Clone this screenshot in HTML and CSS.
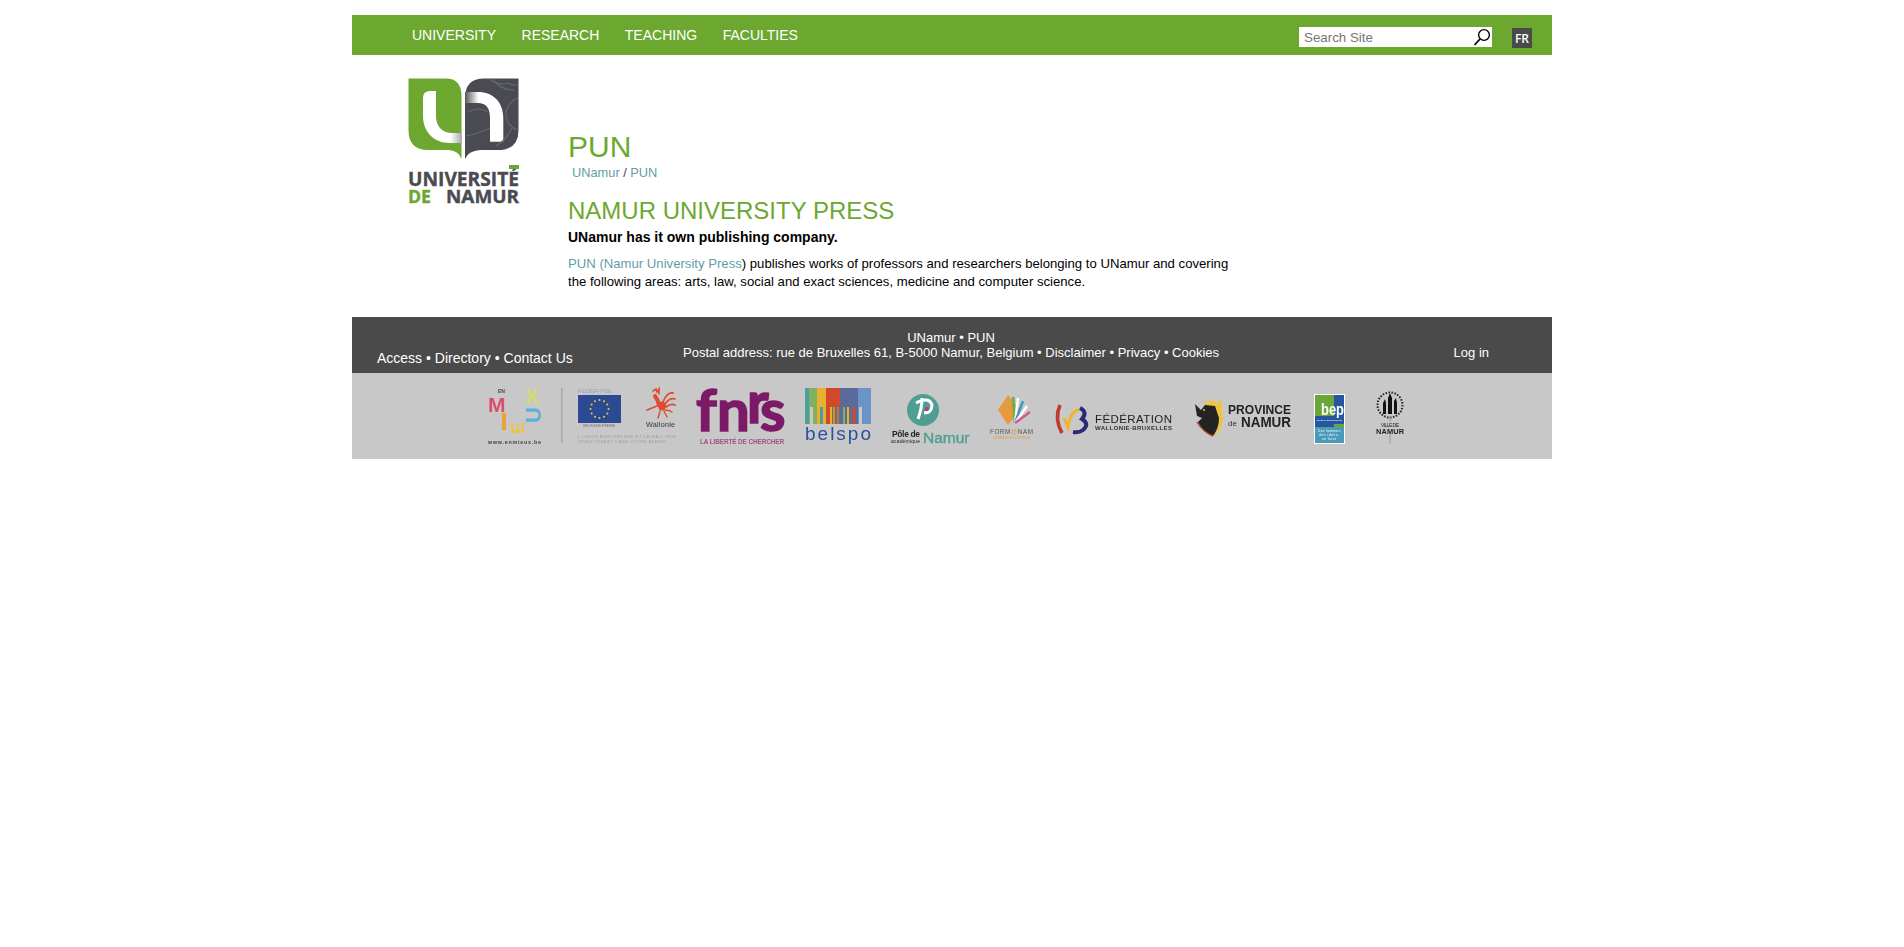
FILE: index.html
```html
<!DOCTYPE html>
<html lang="en">
  <head>
    <meta charset="UTF-8" />
    <meta name="viewport" content="width=device-width, initial-scale=1.0" />
    <title>PUN - UNamur</title>
    <link rel="stylesheet" href="styles.css">
  </head>

  <body>
    <div class="wrapper">
      <header class="topbar">
        <nav class="menu">
          <a href="#">UNIVERSITY</a>
          <a href="#">RESEARCH</a>
          <a href="#">TEACHING</a>
          <a href="#">FACULTIES</a>
        </nav>
        <form class="search">
          <input type="text" placeholder="Search Site" />
          <svg width="20" height="20" viewBox="0 0 20 20">
            <circle cx="12" cy="8" r="5.4" fill="none" stroke="#000" stroke-width="1.4" />
            <path d="M8 12 L2.5 18" stroke="#000" stroke-width="1.8" fill="none" />
          </svg>
        </form>
        <a class="lang" href="#">FR</a>
      </header>

      <main class="main">
        <div class="brand">
          <svg width="112" height="130" viewBox="0 0 112 130">
            <defs>
              <linearGradient id="ufade" x1="0" x2="1" y1="0" y2="0">
                <stop offset="0.7" stop-color="#fff" />
                <stop offset="1" stop-color="#a9a9a9" />
              </linearGradient>
              <linearGradient id="nfade" x1="0" x2="1" y1="0" y2="0">
                <stop offset="0" stop-color="#55565c" />
                <stop offset="0.35" stop-color="#fff" />
              </linearGradient>
            </defs>
            <path d="M0.5 0.5 H38 Q53.5 0.5 53.5 18 V81 Q51 73 41 72 H20 Q0.5 72 0.5 52 Z" fill="#6ca82f" />
            <path d="M57 81 V20 Q57 0.5 76 0.5 H110.5 V52 Q110.5 72 90 72 H72 Q60 73 57 81 Z" fill="#4a4b52" />
            <path d="M15 20 Q15 13 22 13 H28 V38 C28 48 34 55 44 55 H54 V65 H42 C26 65 15 54 15 38 Z" fill="url(#ufade)" />
            <path d="M57 14 H70 C85 14 95.3 24 95.3 40 V63.7 H82 V40 Q82 25 70 25 H57 Z" fill="url(#nfade)" />
            <g fill="none" stroke="#66676d" stroke-width="1.2">
              <path d="M82 1 Q90 8 100 5 Q105 8 110 7" />
              <path d="M86 3 Q94 12 106 12" />
              <path d="M60 34 Q70 28 80 34" />
              <path d="M58 58 Q70 56 82 50" />
              <path d="M88 68 Q98 62 104 50" />
              <path d="M110 20 A 18 18 0 0 0 98 38 A 16 16 0 0 0 110 52" />
            </g>
            <text class="brand-name" x="0" y="108" textLength="111" lengthAdjust="spacingAndGlyphs" font-size="20" fill="#4a4b52" stroke="#4a4b52" stroke-width="0.4">UNIVERSITÉ</text>
            <rect x="101" y="87" width="10" height="4" fill="#6ca82f" />
            <text class="brand-name" x="0" y="125" textLength="23" lengthAdjust="spacingAndGlyphs" font-size="18" fill="#6ca82f" stroke="#6ca82f" stroke-width="0.4">DE</text>
            <text class="brand-name" x="38" y="125" textLength="73" lengthAdjust="spacingAndGlyphs" font-size="18" fill="#4a4b52" stroke="#4a4b52" stroke-width="0.4">NAMUR</text>
          </svg>
        </div>

        <section class="content">
          <h1>PUN</h1>
          <p class="crumbs"><a href="#">UNamur</a> / <a href="#">PUN</a></p>
          <h2>NAMUR UNIVERSITY PRESS</h2>
          <p class="lead">UNamur has it own publishing company.</p>
          <p class="text"><a href="#">PUN (Namur University Press</a>) publishes works of professors and researchers belonging to UNamur and covering the following areas: arts, law, social and exact sciences, medicine and computer science.</p>
        </section>
      </main>

      <footer class="foot">
        <div class="foot-left"><a href="#">Access</a> • <a href="#">Directory</a> • <a href="#">Contact Us</a></div>
        <div class="foot-mid">
          <a href="#">UNamur</a> • <a href="#">PUN</a><br />
          Postal address: rue de Bruxelles 61, B-5000 Namur, Belgium • <a href="#">Disclaimer</a> • <a href="#">Privacy</a> • <a href="#">Cookies</a>
        </div>
        <div class="foot-right"><a href="#">Log in</a></div>
      </footer>

      <div class="partners">
        <!-- en mieux -->
        <svg width="53" height="60" viewBox="0 0 53 60">
          <text class="b" x="0" y="25.7" font-size="21" fill="#d9506f">M</text>
          <text class="b" x="10" y="7" font-size="5" fill="#444">EN</text>
          <text class="b" x="37" y="18.3" font-size="22" fill="#d4dc70">X</text>
          <text class="b" transform="translate(53 37) rotate(-90)" font-size="22" fill="#5cb0e0">U</text>
          <rect x="14" y="27" width="4" height="17" fill="#e8a23a" />
          <text class="b" transform="translate(36 48) rotate(-90)" font-size="18" fill="#eec342">E</text>
          <text class="b" x="0" y="58" font-size="5.4" textLength="53" fill="#444">www.enmieux.be</text>
        </svg>

        <!-- feder + wallonie -->
        <svg width="115" height="60" viewBox="0 0 115 60">
          <rect x="0" y="2" width="1.5" height="55" fill="#a8a8a8" />
          <text x="17" y="7" font-size="6" textLength="34" fill="#9aa0bb">FEDER-FSE</text>
          <rect x="17" y="9" width="43" height="28" fill="#2c4a94" />
          <g fill="#e8d040">
            <circle cx="38.5" cy="14" r="1" /><circle cx="43" cy="15.2" r="1" /><circle cx="46.3" cy="18.5" r="1" />
            <circle cx="47.5" cy="23" r="1" /><circle cx="46.3" cy="27.5" r="1" /><circle cx="43" cy="30.8" r="1" />
            <circle cx="38.5" cy="32" r="1" /><circle cx="34" cy="30.8" r="1" /><circle cx="30.7" cy="27.5" r="1" />
            <circle cx="29.5" cy="23" r="1" /><circle cx="30.7" cy="18.5" r="1" /><circle cx="34" cy="15.2" r="1" />
          </g>
          <text x="22" y="40.5" font-size="2.8" textLength="32" fill="#666">UNION EUROPÉENNE</text>
          <g fill="none" stroke="#e04a30" stroke-linecap="round">
            <path d="M94 10 Q97 14 98 19" stroke-width="4" />
            <path d="M92 5 L95 3 L96 6 L98 3 L98 8" stroke-width="1.6" />
            <ellipse cx="101" cy="20" rx="4" ry="4.5" fill="#e04a30" stroke="none" />
            <path d="M102 16 Q106 6 112 7" stroke-width="1.8" />
            <path d="M104 18 Q109 11 114 13" stroke-width="1.8" />
            <path d="M105 21 Q110 17 114 19" stroke-width="1.8" />
            <path d="M104 24 Q108 24 111 26" stroke-width="1.4" />
            <path d="M96 20 Q91 22 86 24" stroke-width="1.6" />
            <path d="M99 25 L97 32" stroke-width="1.4" />
            <path d="M103 25 L106 31" stroke-width="1.4" />
          </g>
          <text x="85" y="41" font-size="7.2" textLength="29" fill="#333">Wallonie</text>
          <text x="17" y="51.5" font-size="4" textLength="98" fill="#9b9b9b">L'UNION EUROPÉENNE ET LA WALLONIE</text>
          <text x="17" y="57" font-size="4" textLength="88" fill="#9b9b9b">INVESTISSENT DANS VOTRE AVENIR</text>
        </svg>

        <!-- fnrs -->
        <svg width="89" height="60" viewBox="0 0 89 60">
          <text class="fnrs" font-size="58" fill="#7d1a68" stroke="#7d1a68" stroke-width="1.6"><tspan x="0" y="45">f</tspan><tspan x="21" y="45">n</tspan><tspan x="51" y="37">r</tspan><tspan x="64" y="45">s</tspan></text>
          <text class="b" x="4" y="58" font-size="6.4" textLength="84" fill="#a0508a">LA LIBERTÉ DE CHERCHER</text>
        </svg>

        <!-- belspo -->
        <svg width="66" height="60" viewBox="0 0 66 60">
          <rect x="0" y="2" width="4" height="36" fill="#4aa0a0" />
          <rect x="4" y="2" width="8" height="36" fill="#80b060" />
          <rect x="12" y="2" width="9" height="36" fill="#e8b030" />
          <rect x="21" y="2" width="14" height="36" fill="#d04a2a" />
          <rect x="35" y="2" width="18" height="36" fill="#5a6a9a" />
          <rect x="53" y="2" width="13" height="36" fill="#6a94c8" />
          <g>
            <rect x="5" y="21" width="3" height="17" fill="#c8c8c8" />
            <rect x="15" y="21" width="3" height="17" fill="#4aa0a0" />
            <rect x="25" y="21" width="2" height="17" fill="#e8b030" />
            <rect x="28" y="21" width="2" height="17" fill="#80b060" />
            <rect x="32" y="21" width="2" height="17" fill="#4aa0a0" />
            <rect x="38" y="21" width="2" height="17" fill="#80b060" />
            <rect x="42" y="21" width="2" height="17" fill="#e8b030" />
            <rect x="47" y="21" width="3" height="17" fill="#d04a2a" />
            <rect x="54" y="21" width="3" height="17" fill="#c8c8c8" />
          </g>
          <text x="0" y="54" font-size="19" textLength="66" fill="#2c50a0">belspo</text>
        </svg>

        <!-- pole de namur -->
        <svg width="79" height="60" viewBox="0 0 79 60">
          <circle cx="32" cy="24" r="16" fill="#4f9e92" />
          <path d="M27 33 Q31 22 31 12 M25 17 Q38 10 41 19 Q41 27 33 27" fill="none" stroke="#fff" stroke-width="3" />
          <circle cx="36" cy="23" r="2" fill="#d6297e" />
          <text class="b" x="1" y="51" font-size="8.4" textLength="28" fill="#222">Pôle de</text>
          <text x="0" y="57" font-size="5" textLength="29" fill="#222">académique</text>
          <text x="32" y="57" font-size="15.5" fill="#4f9e92" stroke="#4f9e92" stroke-width="0.4">Namur</text>
        </svg>

        <!-- formanam -->
        <svg width="43" height="60" viewBox="0 0 43 60">
          <path d="M18 9 L30 24 L18 39 L8 24 Z" fill="#e59a3c" />
          <path d="M25 37 L23 11" stroke="#6fae45" stroke-width="3" />
          <path d="M25 37 L28 12" stroke="#fff" stroke-width="2.4" />
          <path d="M25 37 L33 15" stroke="#3d9ec0" stroke-width="2.6" />
          <path d="M25 37 L37 20" stroke="#fff" stroke-width="2.4" />
          <path d="M25 37 L40 26" stroke="#d8558e" stroke-width="2.6" />
          <text x="0" y="48" font-size="6.4" textLength="43" fill="#555">FORM<tspan fill="#e59a3c">@</tspan>NAM</text>
          <text x="3" y="53" font-size="3" textLength="37" fill="#e59a3c">FORMATION CONTINUE</text>
        </svg>

        <!-- federation wallonie-bruxelles -->
        <svg width="120" height="60" viewBox="0 0 120 60">
          <path d="M7 19 Q1 33 9 47" fill="none" stroke="#c0392b" stroke-width="3.6" />
          <path d="M11 32 L15 41 Q18 24 26 24" fill="none" stroke="#f0b428" stroke-width="3" />
          <path d="M27 22 Q35 26 29 33 Q37 38 30 44 Q26 47 20 46" fill="none" stroke="#2b2a77" stroke-width="4" />
          <text x="42" y="36.5" font-size="11.5" textLength="77" fill="#222">FÉDÉRATION</text>
          <text class="b" x="42" y="44" font-size="6" textLength="77" fill="#333">WALLONIE-BRUXELLES</text>
        </svg>

        <!-- province de namur -->
        <svg width="99" height="60" viewBox="0 0 99 60">
          <path d="M10 13 L14 18 L19 12 L23 18 L28 13 L30 34 Q28 44 22 50 L17 40 Z" fill="#eec342" />
          <path d="M2 18 L8 24 L12 19 L22 20 L26 32 Q26 42 20 50 Q10 46 5 36 L9 32 L4 30 Z" fill="#232323" />
          <path d="M4 36 Q10 46 20 50" fill="none" stroke="#b33a2a" stroke-width="1.4" />
          <circle cx="11" cy="24" r="1" fill="#eec342" />
          <text class="b" x="35" y="28.3" font-size="13" textLength="63" lengthAdjust="spacingAndGlyphs" fill="#222">PROVINCE</text>
          <text x="35" y="40" font-size="8" fill="#333">de</text>
          <text class="b" x="48" y="40.6" font-size="14" textLength="50" lengthAdjust="spacingAndGlyphs" fill="#222">NAMUR</text>
        </svg>

        <!-- bep -->
        <svg width="33" height="60" viewBox="0 0 33 60">
          <rect x="2" y="8" width="31" height="50" fill="#fff" />
          <rect x="3" y="9" width="29" height="32" fill="#2656a0" />
          <rect x="3" y="9" width="19" height="21" fill="#6ca63a" />
          <rect x="22" y="38" width="10" height="3" fill="#6ca63a" />
          <rect x="3" y="41" width="29" height="16" fill="#4a9ab8" />
          <text class="b" x="9" y="29" font-size="17" textLength="23" lengthAdjust="spacingAndGlyphs" fill="#fff">bep</text>
          <text x="5" y="35" font-size="2.4" textLength="25" fill="#fff">BUREAU ÉCONOMIQUE</text>
          <text x="6" y="46" font-size="3.2" textLength="23" fill="#fff">Des hommes,</text>
          <text x="7" y="50" font-size="3.2" textLength="20" fill="#fff">des idées,</text>
          <text x="10" y="54" font-size="3.2" textLength="14" fill="#fff">un futur</text>
        </svg>

        <!-- ville de namur -->
        <svg width="39" height="60" viewBox="0 0 39 60">
          <circle cx="25" cy="19" r="12.5" fill="none" stroke="#222" stroke-width="2" stroke-dasharray="1.5 1.5" />
          <path d="M18 28 V17 L20 13 L21 17 V28 M23 28 V12 L25 7 L27 12 V28 M29 28 V15 L31 12 L32 17 V28" fill="#111" />
          <path d="M25 30 V36 M25 48 V58" stroke="#999" stroke-width="1" />
          <text x="16" y="41" font-size="5" textLength="18" fill="#222">VILLE DE</text>
          <text class="b" x="11" y="48" font-size="7.4" textLength="28" fill="#222">NAMUR</text>
        </svg>
      </div>
    </div>
  </body>
</html>
```

FILE: styles.css
```css
body {
  margin: 0;
  background-color: #fff;
  font-family: "Liberation Sans", Arial, sans-serif;
  font-size: 14px;
  color: #000;
}
a {
  text-decoration: none;
  color: inherit;
}
svg {
  overflow: visible;
}

.wrapper {
  width: 1200px;
  margin: 15px auto 0;
}

/* top bar */
.topbar {
  display: flex;
  align-items: flex-start;
  height: 40px;
  background-color: #6ca82f;
}
.menu {
  display: flex;
  gap: 25.5px;
  padding: 12px 0 0 60px;
  line-height: 16px;
  color: #fff;
}
.search {
  display: flex;
  align-items: center;
  width: 193px;
  height: 20px;
  margin: 12px 0 0 auto;
  background-color: #fff;
}
.search input {
  flex: 1;
  min-width: 0;
  border: 0;
  padding: 0 0 0 5px;
  background: transparent;
  font-family: "Liberation Sans", Arial, sans-serif;
  font-size: 13.33px;
}
.lang {
  width: 20px;
  height: 20px;
  margin: 13px 20px 0 20px;
  background-color: #4a4a4a;
  color: #fff;
  font-family: "Open Sans", sans-serif;
  font-size: 12px;
  font-weight: 600;
  line-height: 21px;
  text-align: center;
}

/* main block */
.main {
  display: flex;
  height: 262px;
}
.brand {
  width: 160px;
  padding: 23px 0 0 56px;
}
.brand-name {
  font-family: "Open Sans", sans-serif;
  font-weight: 700;
}
.content {
  width: 665px;
  padding-top: 75px;
}
h1 {
  margin: 0;
  font-size: 30px;
  font-weight: 400;
  line-height: 34px;
  color: #6ca82f;
}
.crumbs {
  margin: 1px 0 0 4px;
  font-size: 12.8px;
  line-height: 16px;
  color: #444;
}
.crumbs a,
.text a {
  color: #5f9ea8;
}
h2 {
  margin: 16px 0 0;
  font-size: 24px;
  font-weight: 400;
  line-height: 28px;
  color: #6ca82f;
}
.lead {
  margin: 3px 0 0;
  font-weight: 700;
  line-height: 18px;
}
.text {
  margin: 9px 0 0;
  font-size: 13.15px;
  line-height: 18px;
}

/* footer */
.foot {
  display: grid;
  grid-template-columns: 331px auto 1fr;
  height: 56px;
  background-color: #4a4a4a;
  color: #fff;
  font-size: 13px;
  line-height: 16px;
}
.foot-left {
  padding: 33px 0 0 25px;
  font-size: 14px;
}
.foot-mid {
  padding-top: 13px;
  line-height: 15px;
  text-align: center;
}
.foot-right {
  padding: 28px 63px 0 0;
  text-align: right;
}

/* partner logos */
.partners {
  display: flex;
  align-items: center;
  gap: 20px;
  height: 86px;
  padding-left: 136px;
  background-color: #c8c8c8;
  font-family: "Liberation Sans", Arial, sans-serif;
}
.partners svg {
  filter: blur(0.3px);
  flex: none;
}
.b {
  font-weight: 700;
}
.fnrs {
  font-family: "Lato", sans-serif;
  font-weight: 700;
}
```
